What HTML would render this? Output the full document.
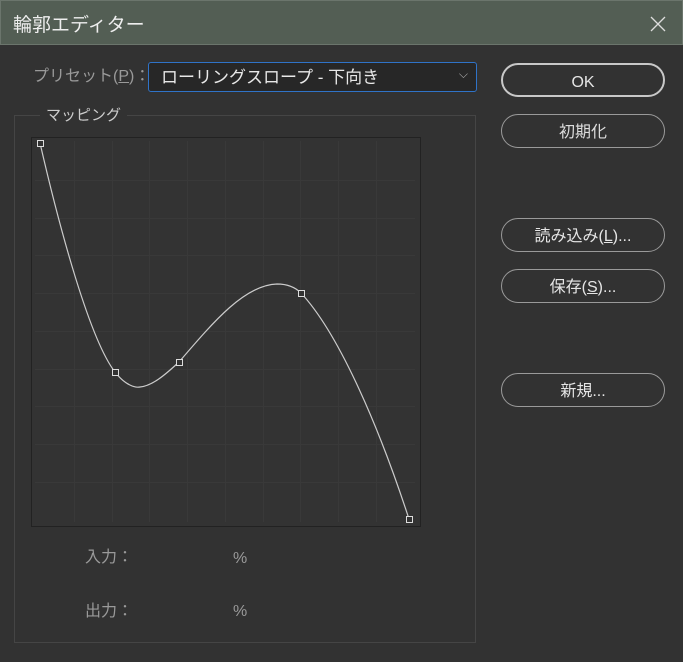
<!DOCTYPE html><html><head><meta charset="utf-8"><style>
body{margin:0;width:683px;height:662px;background:#323232;font-family:"Liberation Sans","Noto Sans CJK JP",sans-serif;position:relative;overflow:hidden;color:#ddd}
.t{position:absolute;left:0;top:0;width:683px;height:45px;background:#535e54;border:1px solid #6b756c;box-sizing:border-box}
.t span{position:absolute;left:12px;top:9px;font-size:19px;color:#eee}
.btn{position:absolute;left:501px;width:164px;height:34px;border:1px solid #9a9a9a;border-radius:17px;box-sizing:border-box;text-align:center;line-height:35px;font-size:16px;color:#e6e6e6}
.lbl{position:absolute;font-size:15px;color:#9a9a9a}
</style></head><body>
<div class="t"><span>輪郭エディター</span>
<svg style="position:absolute;left:649px;top:15px" width="16" height="16"><path d="M1 1L15 15M15 1L1 15" stroke="#ddd" stroke-width="1.3"/></svg></div>
<div class="lbl" style="left:33px;top:62px;font-size:16px">プリセット(<u>P</u>)：</div>
<div style="position:absolute;left:148px;top:62px;width:329px;height:30px;border:1px solid #2f73c8;border-radius:3px;box-sizing:border-box;background:#272727;font-size:17px;color:#e8e8e8;padding:0 0 0 12px">ローリングスロープ - 下向き<span style="position:absolute;right:8px;top:4px;font-size:12px;color:#aaa">⌵</span></div>
<div class="btn" style="top:63px;border-width:2px;border-color:#c8c8c8;line-height:35px">OK</div>
<div class="btn" style="top:114px;color:#ddd">初期化</div>
<div class="btn" style="top:218px">読み込み(<u>L</u>)...</div>
<div class="btn" style="top:269px">保存(<u>S</u>)...</div>
<div class="btn" style="top:373px">新規...</div>
<div style="position:absolute;left:14px;top:115px;width:462px;height:528px;border:1px solid #454545;box-sizing:border-box"></div>
<div style="position:absolute;left:40px;top:104px;background:#323232;padding:0 6px;font-size:15px;color:#ccc">マッピング</div>
<svg style="position:absolute;left:0;top:0" width="683" height="662">
<rect x="31.5" y="137.5" width="389" height="389" fill="#333" stroke="#222"/>
<g stroke="#393939" stroke-width="1">
<path d="M74.5 141V522M112.5 141V522M149.5 141V522M187.5 141V522M225.5 141V522M263.5 141V522M300.5 141V522M338.5 141V522M376.5 141V522"/>
<path d="M35 180.5H415M35 218.5H415M35 255.5H415M35 293.5H415M35 331.5H415M35 369.5H415M35 406.5H415M35 444.5H415M35 482.5H415"/>
</g>
<path d="M40 143 C60 230 90 340 115 372 C125 385 135 388 140 387 C152 386 165 375 179 362 C215 320 245 285 277 284 C288 284 296 288 301 293 C340 335 380 430 409 519" fill="none" stroke="#ccc" stroke-width="1.2"/>
<g fill="#333" stroke="#ddd" stroke-width="1">
<rect x="37.5" y="140.5" width="6" height="6"/><rect x="112.5" y="369.5" width="6" height="6"/><rect x="176.5" y="359.5" width="6" height="6"/><rect x="298.5" y="290.5" width="6" height="6"/><rect x="406.5" y="516.5" width="6" height="6"/>
</g></svg>
<div class="lbl" style="left:85px;top:543px;font-size:16px">入力：</div>
<div class="lbl" style="left:233px;top:550px;font-size:16px">%</div>
<div class="lbl" style="left:85px;top:597px;font-size:16px">出力：</div>
<div class="lbl" style="left:233px;top:603px;font-size:16px">%</div>
</body></html>
